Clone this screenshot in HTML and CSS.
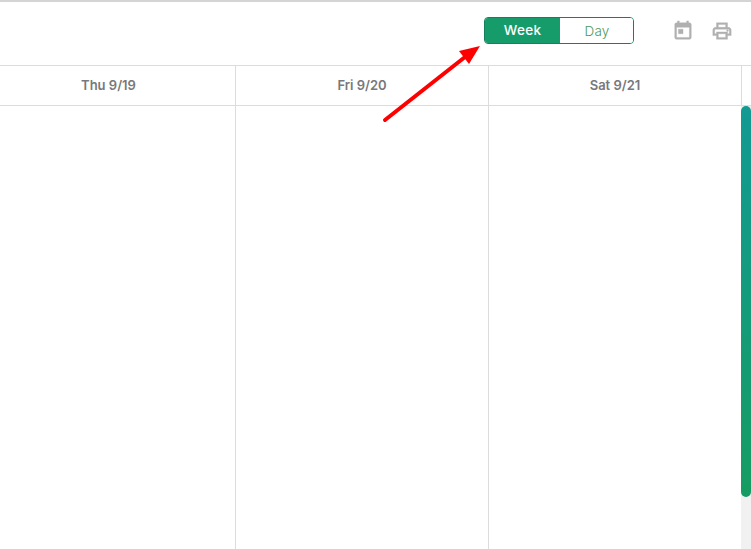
FILE: index.html
```html
<!DOCTYPE html>
<html lang="en">
<head>
<meta charset="utf-8">
<title>Calendar</title>
<link rel="stylesheet" href="styles.css">
</head>
<body>
<div class="app">
  <header class="toolbar">
    <div class="toggle">
      <span class="toggle-btn active">Week</span>
      <span class="toggle-btn">Day</span>
    </div>
    <div class="actions">
      <svg class="icon" viewBox="0 0 24 24" aria-hidden="true"><path d="M19 3h-1V1h-2v2H8V1H6v2H5c-1.100 0-2 .9-2 2v14c0 1.100.9 2 2 2h14c1.100 0 2-.9 2-2V5c0-1.100-.9-2-2-2zm0 16H5V8h14v11zM7 10h5v5H7z"/></svg>
      <svg class="icon" viewBox="0 0 24 24" aria-hidden="true"><path d="M19 8h-1V3H6v5H5c-1.660 0-3 1.340-3 3v6h4v4h12v-4h4v-6c0-1.660-1.340-3-3-3zM8 5h8v3H8V5zm8 12v2H8v-4h8v2zm2-2v-2H6v2H4v-4c0-.55.45-1 1-1h14c.55 0 1 .45 1 1v4h-2z"/><circle cx="18" cy="11.500" r="1"/></svg>
    </div>
  </header>
  <div class="days">
    <div class="day-head">Thu 9/19</div>
    <div class="day-head">Fri 9/20</div>
    <div class="day-head">Sat 9/21</div>
    <div class="head-end"></div>
  </div>
  <div class="grid">
    <div class="day-col"></div>
    <div class="day-col"></div>
    <div class="day-col last"></div>
    <div class="scrollbar"><div class="thumb"></div></div>
  </div>
  <svg class="arrow" width="110" height="90" viewBox="0 0 110 90" aria-hidden="true">
    <line x1="6" y1="75" x2="86" y2="12" stroke="#ff0000" stroke-width="4" stroke-linecap="round"/>
    <polygon points="101,1 80,6 90,19" fill="#ff0000"/>
  </svg>
</div>
</body>
</html>
```
FILE: styles.css
```css
* { box-sizing: border-box; }
html, body { margin: 0; height: 100%; overflow: hidden; background: #fff; }
.app {
  position: relative;
  display: flex;
  flex-direction: column;
  width: 751px;
  height: 549px;
  border-top: 2px solid #d4d4d4;
  font-family: Inter, "Open Sans", sans-serif;
  overflow: hidden;
}
.toolbar {
  display: flex;
  justify-content: flex-end;
  align-items: flex-start;
  height: 63px;
  flex: none;
  padding: 15px 18px 0 0;
}
.toggle {
  display: flex;
  width: 150px;
  height: 27px;
  border: 1px solid #14805f;
  border-radius: 4px;
  overflow: hidden;
  font-size: 13.5px;
}
.toggle-btn {
  flex: 1;
  display: flex;
  align-items: center;
  justify-content: center;
  padding-left: 1px;
  color: #4a9a60;
  font-weight: 300;
  letter-spacing: 0.2px;
  background: #fff;
}
.toggle-btn.active {
  flex: none;
  width: 75px;
  padding-left: 0;
  padding-bottom: 1px;
  background: #169c6a;
  color: #fff;
  font-weight: 500;
  letter-spacing: 0.3px;
}
.actions {
  display: flex;
  gap: 17px;
  margin-left: 38px;
  margin-top: 3px;
}
.icon { width: 22px; height: 22px; fill: #b0b0b0; stroke: #b0b0b0; stroke-width: 0.4; display: block; }
.days, .grid {
  display: grid;
  margin-left: -18px;
  width: 769px;
}
.days {
  grid-template-columns: 254px 253px 253px 9px;
  height: 41px;
  flex: none;
  border-top: 1px solid #dcdcdc;
  border-bottom: 1px solid #dcdcdc;
}
.grid {
  grid-template-columns: 254px 253px 252px 10px;
  flex: 1;
  min-height: 0;
}
.day-head {
  display: flex;
  align-items: center;
  justify-content: center;
  padding-bottom: 2px;
  border-right: 1px solid #dcdcdc;
  font-size: 13px;
  font-weight: 600;
  color: #77787b;
}
.day-col { border-right: 1px solid #dcdcdc; }
.day-col.last { border-right: 0; }
.scrollbar { background: #f1f1f1; }
.thumb {
  height: 391px;
  border-radius: 5px;
  background: linear-gradient(to bottom, #129a94, #169c62);
}
.arrow { position: absolute; left: 379px; top: 43px; }
```
